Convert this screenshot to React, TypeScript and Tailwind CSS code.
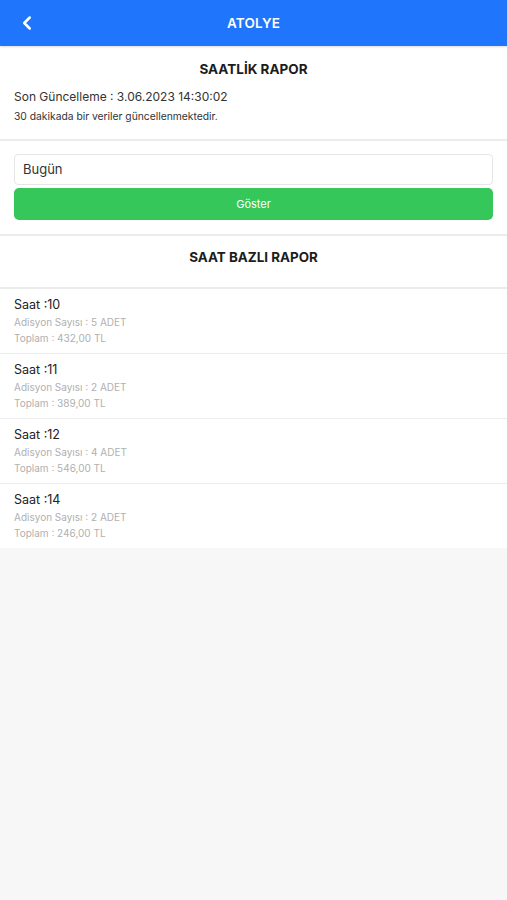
import { ChevronLeft } from "lucide-react";

const rows = [
  { saat: "10", adet: 5, toplam: "432,00" },
  { saat: "11", adet: 2, toplam: "389,00" },
  { saat: "12", adet: 4, toplam: "546,00" },
  { saat: "14", adet: 2, toplam: "246,00" },
];

export default function App() {
  return (
    <div className="min-h-[900px] bg-[#f7f7f7] font-['Inter',sans-serif] text-[#1c1c1c]">
      <div className="relative flex h-[46px] items-center justify-center bg-[#1f76fc] shadow-[0_1px_2px_rgba(0,0,0,0.15)]">
        <ChevronLeft className="absolute left-[16px] h-[22px] w-[22px] text-white" strokeWidth={2.75} />
        <span className="text-[13.5px] font-semibold tracking-[0.2px] text-white">ATOLYE</span>
      </div>

      <div className="bg-white px-[14px] pb-[16px] pt-[15px]">
        <h1 className="text-center text-[13.5px] font-bold leading-[17px]">SAATLİK RAPOR</h1>
        <p className="mt-[11px] text-[12px] leading-[16px] text-[#333]">Son Güncelleme : 3.06.2023 14:30:02</p>
        <p className="mt-[5px] text-[10.3px] leading-[13px] text-[#333]">30 dakikada bir veriler güncellenmektedir.</p>
      </div>

      <div className="h-[2px] bg-[#ececec]" />

      <div className="bg-white px-[14px] pb-[14px] pt-[13px]">
        <div className="flex h-[31px] items-center rounded-[4px] border border-[#e6e6e6] px-[8px] text-[13px] text-[#333]">
          Bugün
        </div>
        <button className="mt-[3px] flex h-[32px] w-full items-center justify-center rounded-[5px] bg-[#35c75a] text-[11px] text-white">
          Göster
        </button>
      </div>

      <div className="h-[2px] bg-[#ececec]" />

      <div className="flex h-[51px] justify-center bg-white pt-[13px]">
        <h2 className="text-[13.4px] font-bold leading-[17px]">SAAT BAZLI RAPOR</h2>
      </div>

      <div className="h-[2px] bg-[#ececec]" />

      <div className="flex flex-col gap-[1px] bg-[#ececec]">
        {rows.map((r) => (
          <div key={r.saat} className="h-[64px] bg-white px-[14px] pt-[8px]">
            <p className="text-[12.5px] leading-[16px] text-[#222]">Saat :{r.saat}</p>
            <p className="mt-[1px] text-[10px] leading-[16px] text-[#b0b0b0]">Adisyon Sayısı : {r.adet} ADET</p>
            <p className="text-[10px] leading-[16px] text-[#b0b0b0]">Toplam : {r.toplam} TL</p>
          </div>
        ))}
      </div>
    </div>
  );
}
